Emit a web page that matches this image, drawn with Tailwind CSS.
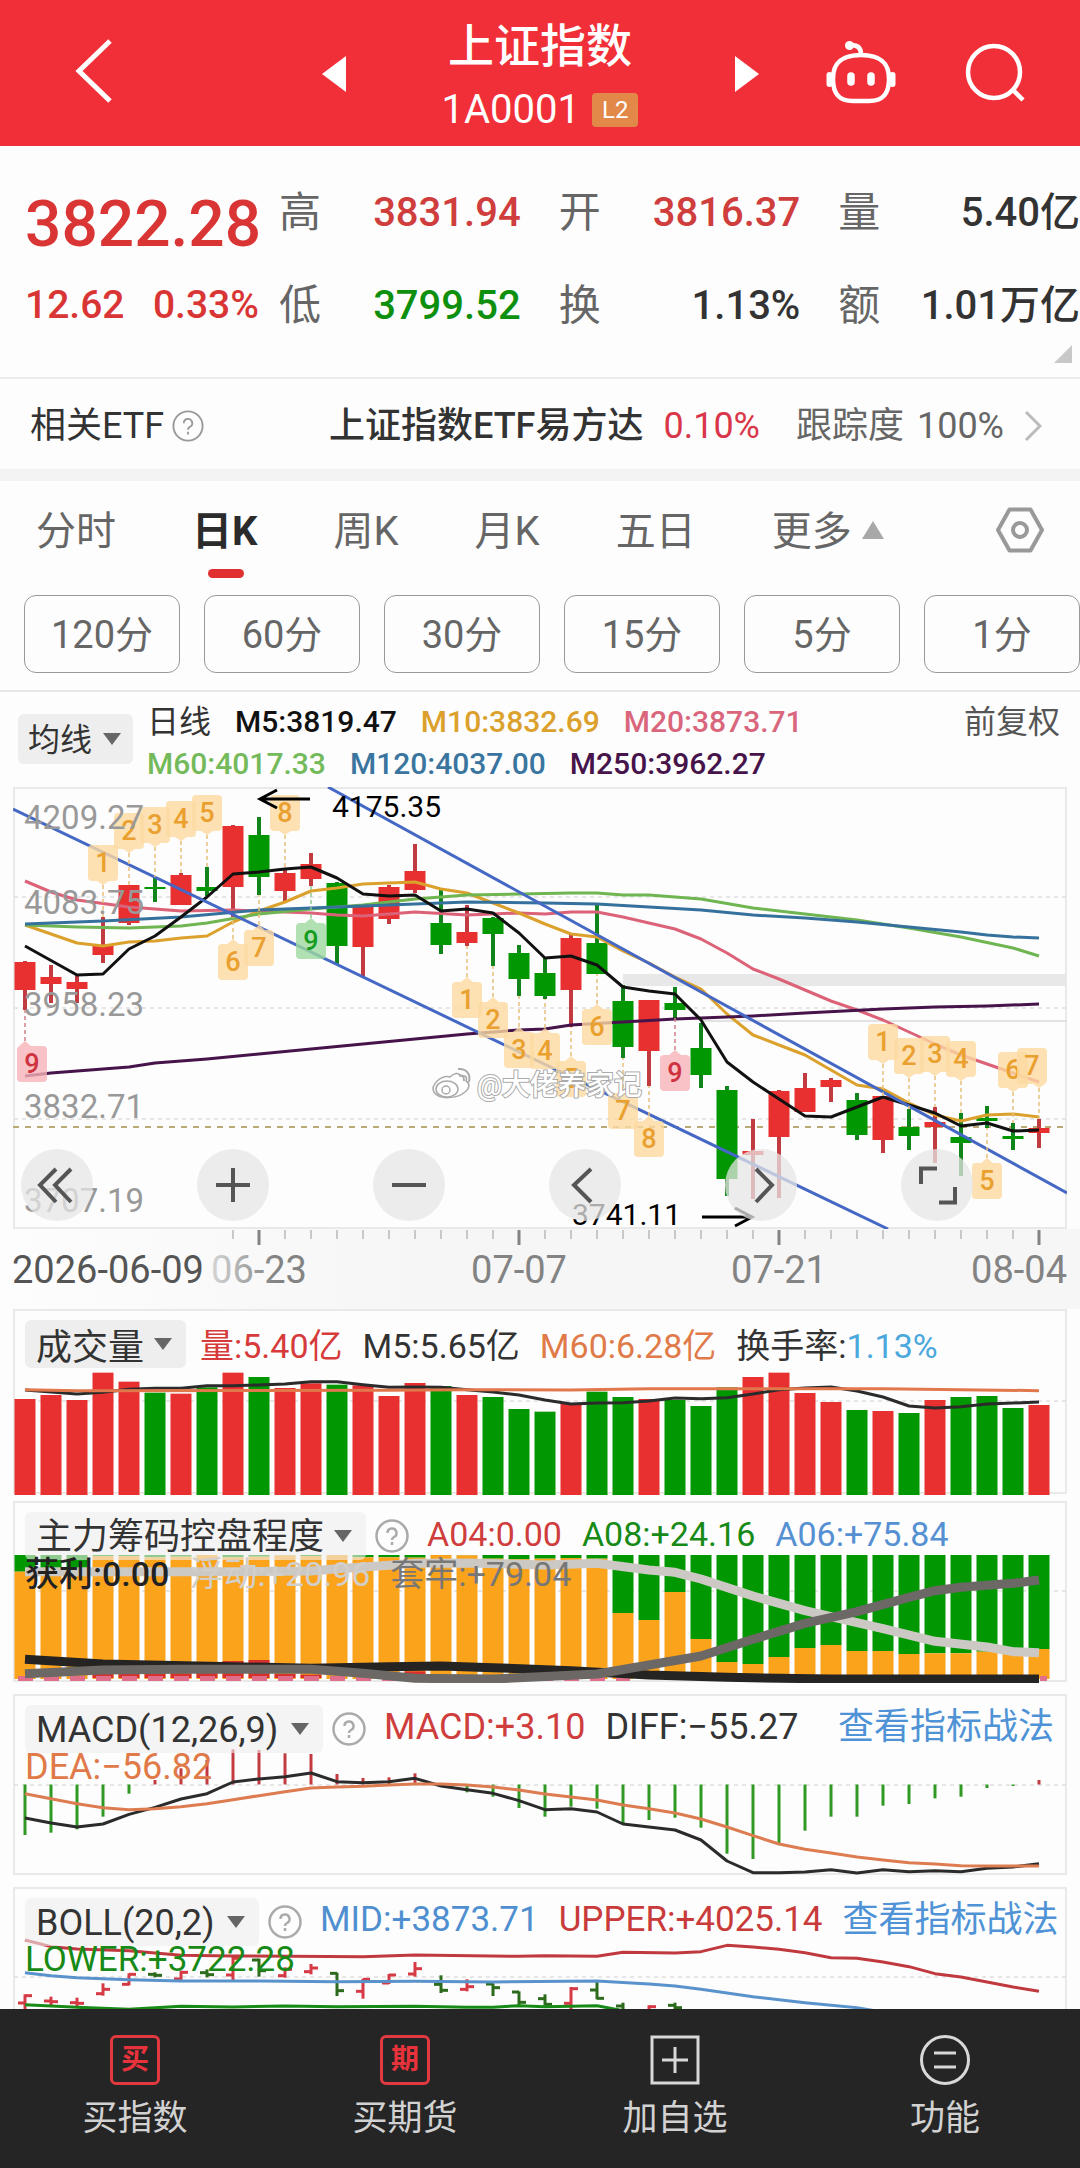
<!DOCTYPE html>
<html lang="zh-CN">
<head>
  <meta charset="UTF-8">
  <meta name="viewport" content="width=device-width, initial-scale=1.0">
  <title>上证指数 1A0001</title>
  <script src="https://cdn.jsdelivr.net/npm/@tailwindcss/browser@4"></script>
</head>
<body class="flex h-screen flex-col overflow-hidden bg-[#fdfdfd] font-['Roboto','Noto_Sans_CJK_SC',sans-serif] text-[#333]">

  <!-- Header -->
  <header class="relative flex h-[146px] shrink-0 items-center justify-center bg-[#f12f38] pt-2.5 text-white">
    <button class="absolute left-[74px] top-[38px]" aria-label="返回">
      <svg class="h-[66px] w-10" viewBox="0 0 40 66" fill="none" stroke="#fff" stroke-width="5"><path d="M36 3 5 33l31 30"/></svg>
    </button>
    <button class="absolute left-[322px] top-[56px]" aria-label="上一个">
      <svg class="h-9 w-6" viewBox="0 0 24 36" fill="#fff"><path d="M24 0v36L0 18z"/></svg>
    </button>
    <div class="flex flex-col items-center">
      <h1 class="text-[46px] font-medium leading-[64px]">上证指数</h1>
      <div class="flex items-center gap-3">
        <span class="text-[40px] leading-[64px]">1A0001</span>
        <span class="rounded-sm bg-[#e2894a] px-2.5 text-[24px] leading-[34px]">L2</span>
      </div>
    </div>
    <button class="absolute left-[735px] top-[56px]" aria-label="下一个">
      <svg class="h-9 w-6" viewBox="0 0 24 36" fill="#fff"><path d="M0 0v36l24-18z"/></svg>
    </button>
    <button class="absolute right-[183px] top-[38px]" aria-label="智能助手">
      <svg class="h-[68px] w-[72px]" viewBox="0 0 72 68" fill="none" stroke="#fff" stroke-width="4.500" stroke-linecap="round">
        <path d="M36 17C60 17 64 29 64 41S60 63 44 63H28C12 63 8 53 8 41S12 17 36 17z"/>
        <path d="M36 16c0-6-3-9-10-9"/>
        <circle cx="24.500" cy="7.500" r="4.500" fill="#fff" stroke="none"/>
        <path d="M4.500 37v9M67.500 37v9" stroke-width="6"/>
        <path d="M26 38v6M46 38v6" stroke-width="7.500"/>
      </svg>
    </button>
    <button class="absolute right-[52px] top-[42px]" aria-label="搜索">
      <svg class="h-[64px] w-[64px]" viewBox="0 0 64 64" fill="none" stroke="#fff" stroke-width="4.500"><circle cx="30" cy="30" r="26"/><path d="m49 48 10 10"/></svg>
    </button>
  </header>

  <main class="min-h-0 flex-1 overflow-hidden">

    <!-- Quote -->
    <section class="relative flex h-[233px] border-b-2 border-[#ececec] pl-[25px] pt-5 text-[40px] font-medium">
      <div class="w-[234px] shrink-0 text-[#d93535]">
        <div class="text-[64px] leading-[118px]">3822.28</div>
        <div class="flex justify-between text-[39px] leading-[42px]"><span>12.62</span><span>0.33%</span></div>
      </div>
      <dl class="ml-5 grid flex-1 grid-cols-3 content-start gap-x-[38px] leading-[93px]">
        <div class="flex h-[93px] justify-between"><dt class="text-[42px] font-normal text-[#666]">高</dt><dd class="text-[#cf3d3d]">3831.94</dd></div>
        <div class="flex h-[93px] justify-between"><dt class="text-[42px] font-normal text-[#666]">开</dt><dd class="text-[#cf3d3d]">3816.37</dd></div>
        <div class="flex h-[93px] justify-between"><dt class="text-[42px] font-normal text-[#666]">量</dt><dd>5.40亿</dd></div>
        <div class="flex h-[93px] justify-between"><dt class="text-[42px] font-normal text-[#666]">低</dt><dd class="text-[#0e8f0e]">3799.52</dd></div>
        <div class="flex h-[93px] justify-between"><dt class="text-[42px] font-normal text-[#666]">换</dt><dd>1.13%</dd></div>
        <div class="flex h-[93px] justify-between"><dt class="text-[42px] font-normal text-[#666]">额</dt><dd class="whitespace-nowrap">1.01万亿</dd></div>
      </dl>
      <svg class="absolute bottom-3.5 right-2 size-[18px]" viewBox="0 0 18 18" fill="#c8c8c8"><path d="M18 0v18H0z"/></svg>
    </section>

    <!-- Related ETF -->
    <section class="flex h-[102px] items-center border-b-12 border-[#f3f3f3] pl-[30px] pr-[38px] pt-1 text-[36px]">
      <span>相关ETF</span>
      <svg class="ml-2 size-8" viewBox="0 0 34 34" fill="none" stroke="#999" stroke-width="2"><circle cx="17" cy="17" r="15.500"/><path d="M12.500 14a4.500 4.500 0 1 1 6.500 4c-1.500.8-2 1.500-2 3M17 23v3"/></svg>
      <a href="#" class="ml-auto flex items-center">
        <span class="font-medium">上证指数ETF易方达</span>
        <span class="ml-5 text-[#d9364a]">0.10%</span>
        <span class="ml-9 text-[#666]">跟踪度 <span class="ml-1">100%</span></span>
        <svg class="ml-5 h-8 w-[18px]" viewBox="0 0 18 32" fill="none" stroke="#bbb" stroke-width="3"><path d="m2 2 14 14L2 30"/></svg>
      </a>
    </section>

    <!-- Periods -->
    <nav class="flex h-[101px] items-center gap-[76px] pl-9 pr-9 text-[40px] text-[#666]">
      <button>分时</button>
      <button class="relative font-bold text-[#2b2b2b]">日K<span class="absolute -bottom-4 left-4 h-[9px] w-9 rounded-full bg-[#e03030]"></span></button>
      <button>周K</button>
      <button>月K</button>
      <button>五日</button>
      <button class="flex items-center gap-2.5">更多<svg class="mb-1 h-[18px] w-[22px]" viewBox="0 0 22 18" fill="#a8a8a8"><path d="m11 0 11 18H0z"/></svg></button>
      <button class="mb-1 ml-auto" aria-label="设置">
        <svg class="h-[46px] w-[48px]" viewBox="0 0 48 46" fill="none" stroke="#999" stroke-width="4" stroke-linejoin="round"><path d="M13.500 2.500h21L46 23 34.500 43.500h-21L2 23z"/><circle cx="24" cy="23" r="7"/></svg>
      </button>
    </nav>
    <div class="flex gap-6 overflow-hidden border-b-2 border-[#e8e8e8] pb-[17px] pl-6 pt-[13px] text-[38px] text-[#666]">
      <button class="h-[78px] w-[156px] shrink-0 rounded-xl border border-[#999] pt-0.5">120分</button>
      <button class="h-[78px] w-[156px] shrink-0 rounded-xl border border-[#999] pt-0.5">60分</button>
      <button class="h-[78px] w-[156px] shrink-0 rounded-xl border border-[#999] pt-0.5">30分</button>
      <button class="h-[78px] w-[156px] shrink-0 rounded-xl border border-[#999] pt-0.5">15分</button>
      <button class="h-[78px] w-[156px] shrink-0 rounded-xl border border-[#999] pt-0.5">5分</button>
      <button class="h-[78px] w-[156px] shrink-0 rounded-xl border border-[#999] pt-0.5">1分</button>
    </div>

    <!-- Moving averages -->
    <div class="flex h-[95px] items-start pl-[18px] pr-5">
      <label class="relative mt-[22px]" aria-label="主图指标">
        <select class="h-[50px] appearance-none rounded-md bg-[#eee] pl-2.5 pr-10 pt-0.5 text-[32px]"><option>均线</option></select>
        <svg class="pointer-events-none absolute right-3 top-[19px] h-3 w-[18px]" viewBox="0 0 18 12" fill="#666"><path d="M0 0h18L9 12z"/></svg>
      </label>
      <div class="ml-[14px] mt-[9px] text-[30px] font-medium leading-[42px]">
        <div class="flex gap-6"><span class="text-[32px] font-normal">日线</span><span class="text-[#111]">M5:3819.47</span><span class="text-[#dba12c]">M10:3832.69</span><span class="text-[#d9667c]">M20:3873.71</span></div>
        <div class="flex gap-6"><span class="text-[#74b95a]">M60:4017.33</span><span class="text-[#3a75a0]">M120:4037.00</span><span class="text-[#46144a]">M250:3962.27</span></div>
      </div>
      <span class="ml-auto mt-[9px] text-[32px] leading-[42px] text-[#555]">前复权</span>
    </div>

    <!-- Candles -->
    <section class="relative mx-[13px]">
      <svg id="price" class="block w-full" viewBox="13 787 1054 442" font-family="Roboto, 'Noto Sans CJK SC', sans-serif"></svg>
      <div class="absolute bottom-2 left-2 flex gap-[104px] text-[#555]">
        <button class="size-[72px] rounded-full bg-[#e6e6e6]/75" aria-label="最左"><svg viewBox="0 0 72 72" fill="none" stroke="currentColor" stroke-width="4"><path d="M35 20 19 36l16 17M50 20 34 36l16 17"/></svg></button>
        <button class="size-[72px] rounded-full bg-[#e6e6e6]/75" aria-label="放大"><svg viewBox="0 0 72 72" fill="none" stroke="currentColor" stroke-width="4"><path d="M19 36h34M36 19v34"/></svg></button>
        <button class="size-[72px] rounded-full bg-[#e6e6e6]/75" aria-label="缩小"><svg viewBox="0 0 72 72" fill="none" stroke="currentColor" stroke-width="4"><path d="M19 36h34"/></svg></button>
        <button class="size-[72px] rounded-full bg-[#e6e6e6]/75" aria-label="左移"><svg viewBox="0 0 72 72" fill="none" stroke="currentColor" stroke-width="4"><path d="M42 20 25 36l17 17"/></svg></button>
        <button class="size-[72px] rounded-full bg-[#e6e6e6]/75" aria-label="右移"><svg viewBox="0 0 72 72" fill="none" stroke="currentColor" stroke-width="4"><path d="m31 20 16 16-16 17"/></svg></button>
        <button class="size-[72px] rounded-full bg-[#e6e6e6]/75" aria-label="全屏"><svg viewBox="0 0 72 72" fill="none" stroke="currentColor" stroke-width="4"><path d="M20 35V19.500h16M54 38v15.500H38"/></svg></button>
      </div>
    </section>
    <div class="bg-linear-to-r from-[#fdfdfd] to-[#f6f6f6] to-40% px-[13px]">
      <svg id="axis" class="block w-full" viewBox="13 1229 1054 80" font-family="Roboto, sans-serif"></svg>
    </div>

    <!-- Volume -->
    <section class="relative mx-[13px] mb-[5px]">
      <svg id="volume" class="block w-full" viewBox="13 9 1054 187"></svg>
      <div class="absolute left-3 right-[13px] top-[11px] flex items-start gap-5 text-[34px] leading-[52px]">
        <label class="relative -mr-1.5" aria-label="副图一">
          <select class="h-[48px] appearance-none rounded-md bg-[#eee] pl-[11px] pr-[41px] pt-0.5 text-[36px]"><option>成交量</option></select>
          <svg class="pointer-events-none absolute right-3.5 top-[18px] h-3 w-[18px]" viewBox="0 0 18 12" fill="#666"><path d="M0 0h18L9 12z"/></svg>
        </label>
        <span class="text-[#d63a3a]">量:5.40亿</span><span>M5:5.65亿</span><span class="text-[#e07a48]">M60:6.28亿</span><span>换手率:<span class="text-[#4aa8dc]">1.13%</span></span>
      </div>
    </section>

    <!-- Position control -->
    <section class="relative mx-[13px] mb-[11px]">
      <svg id="control" class="block w-full" viewBox="13 1 1054 182"></svg>
      <div class="absolute left-3 right-[13px] top-[11px] flex items-start gap-5 text-[34px] leading-11">
        <div class="-mr-0.5 flex items-center gap-[9px]">
          <label class="relative" aria-label="副图二">
            <select class="h-[48px] appearance-none rounded-md bg-[#eee]/60 pl-[11px] pr-[41px] pt-0.5 text-[36px]"><option>主力筹码控盘程度</option></select>
            <svg class="pointer-events-none absolute right-3.5 top-[18px] h-3 w-[18px]" viewBox="0 0 18 12" fill="#666"><path d="M0 0h18L9 12z"/></svg>
          </label>
          <svg class="size-[34px]" viewBox="0 0 34 34" fill="none" stroke="#aaa" stroke-width="2.500"><circle cx="17" cy="17" r="15.500"/><path d="M12.500 14a4.500 4.500 0 1 1 6.500 4c-1.500.8-2 1.500-2 3M17 23v3"/></svg>
        </div>
        <span class="text-[#cf3d3d]">A04:0.00</span><span class="text-[#178a17]">A08:+24.16</span><span class="text-[#5590d2]">A06:+75.84</span>
      </div>
      <div class="absolute left-3 top-[51px] flex gap-5 text-[34px] leading-11">
        <span class="font-medium text-[#222]">获利:0.00</span><span class="text-[#d2cfcb]">浮动:+20.96</span><span class="text-[#777]">套牢:+79.04</span>
      </div>
    </section>

    <!-- MACD -->
    <section class="relative mx-[13px] mb-3">
      <svg id="macd" class="block w-full" viewBox="13 4 1054 181"></svg>
      <div class="absolute left-3 right-[13px] top-[11px] flex items-start gap-5 text-[36px] leading-11">
        <div class="-mr-0.5 flex items-center gap-[9px]">
          <label class="relative" aria-label="副图三">
            <select class="h-[48px] appearance-none rounded-md bg-[#eee]/60 pl-[11px] pr-11 pt-0.5 text-[36px]"><option>MACD(12,26,9)</option></select>
            <svg class="pointer-events-none absolute right-3.5 top-[18px] h-3 w-[18px]" viewBox="0 0 18 12" fill="#666"><path d="M0 0h18L9 12z"/></svg>
          </label>
          <svg class="size-[34px]" viewBox="0 0 34 34" fill="none" stroke="#aaa" stroke-width="2.500"><circle cx="17" cy="17" r="15.500"/><path d="M12.500 14a4.500 4.500 0 1 1 6.500 4c-1.500.8-2 1.500-2 3M17 23v3"/></svg>
        </div>
        <span class="text-[#cf3d3d]">MACD:+3.10</span><span>DIFF:−55.27</span>
        <a href="#" class="ml-auto whitespace-nowrap text-[36px] text-[#4f93d6]">查看指标战法</a>
      </div>
      <div class="absolute left-3 top-[51px] text-[36px] leading-11 text-[#e07a48]">DEA:−56.82</div>
    </section>

    <!-- BOLL -->
    <section class="relative mx-[13px]">
      <svg id="boll" class="block w-full" viewBox="13 7 1054 181"></svg>
      <div class="absolute left-3 right-[13px] top-[11px] flex items-start gap-5 text-[35px] leading-11">
        <div class="-mr-0.5 flex items-center gap-[9px]">
          <label class="relative" aria-label="副图四">
            <select class="h-[48px] appearance-none rounded-md bg-[#eee]/60 pl-[11px] pr-11 pt-0.5 text-[36px]"><option>BOLL(20,2)</option></select>
            <svg class="pointer-events-none absolute right-3.5 top-[18px] h-3 w-[18px]" viewBox="0 0 18 12" fill="#666"><path d="M0 0h18L9 12z"/></svg>
          </label>
          <svg class="size-[34px]" viewBox="0 0 34 34" fill="none" stroke="#aaa" stroke-width="2.500"><circle cx="17" cy="17" r="15.500"/><path d="M12.500 14a4.500 4.500 0 1 1 6.500 4c-1.500.8-2 1.500-2 3M17 23v3"/></svg>
        </div>
        <span class="text-[#4f8fd0]">MID:+3873.71</span><span class="text-[#c93a3a]">UPPER:+4025.14</span>
        <a href="#" class="-ml-2 whitespace-nowrap pl-2 text-[36px] text-[#4f93d6]">查看指标战法</a>
      </div>
      <div class="absolute left-3 top-[51px] text-[35px] leading-11 text-[#178a17]">LOWER:+3722.28</div>
    </section>
  </main>

  <!-- Bottom bar -->
  <nav class="grid h-[159px] shrink-0 grid-cols-4 bg-[#252525] pt-[26px] text-[35px] leading-[52px] text-[#d2d2d2]">
    <button class="flex flex-col items-center gap-2">
      <span class="flex size-[50px] items-center justify-center rounded-md border-3 border-[#e03a40] text-[28px] font-bold leading-none text-[#e8333c]">买</span>买指数
    </button>
    <button class="flex flex-col items-center gap-2">
      <span class="flex size-[50px] items-center justify-center rounded-md border-3 border-[#e03a40] text-[28px] font-bold leading-none text-[#e8333c]">期</span>买期货
    </button>
    <button class="flex flex-col items-center gap-2">
      <svg class="size-[50px]" viewBox="0 0 50 50" fill="none" stroke="#d8d8d8" stroke-width="3"><path d="M2 2h46v46H2zM25 12v26M12 25h26"/></svg>加自选
    </button>
    <button class="flex flex-col items-center gap-2">
      <svg class="size-[50px]" viewBox="0 0 50 50" fill="none" stroke="#d8d8d8" stroke-width="3"><circle cx="25" cy="25" r="23.500"/><path d="M14 18h22M14 32h22"/></svg>功能
    </button>
  </nav>

  <script>
    const RED = '#e83030', GREEN = '#009700', WICK_RED = '#c23b41', WICK_GREEN = '#12841c';
    const X = i => 25 + 26 * i;
    const el = id => document.getElementById(id);
    const line = (x1, y1, x2, y2, c, w, extra = '') => `<line x1="${x1}" y1="${y1}" x2="${x2}" y2="${y2}" stroke="${c}" stroke-width="${w}" ${extra}/>`;
    const rect = (x, y, w, h, c) => `<rect x="${x}" y="${y}" width="${w}" height="${h}" fill="${c}"/>`;
    const text = (x, y, size, c, t, extra = '') => `<text x="${x}" y="${y}" font-size="${size}" fill="${c}" ${extra}>${t}</text>`;
    // pairs: [index, y, index, y, ...]
    const curve = (pairs, c, w, k = 1) => {
      let pts = '';
      for (let n = 0; n < pairs.length; n += 2) pts += `${X(pairs[n])},${pairs[n + 1] * k} `;
      return `<polyline points="${pts}" fill="none" stroke="${c}" stroke-width="${w}" stroke-linejoin="round"/>`;
    };
    const indexed = list => list.flatMap((v, i) => [i, v]);
    const frame = (y, h) => `<rect x="14" y="${y + 1}" width="1052" height="${h - 2}" fill="none" stroke="#e9e9e9" stroke-width="2"/>`;
    const grid = y => line(14, y, 1066, y, '#dedede', 1.5, 'stroke-dasharray="4 4"');

    // up/down, high, top, bottom, low
    const candles = [
      ['r', 961, 962, 990, 1010], ['r', 965, 977, 984, 1003], ['r', 975, 982, 989, 1003], ['r', 917, 945, 955, 963],
      ['r', 885, 885, 923, 925], ['g', 877, 887, 889, 902], ['r', 873, 875, 905, 905], ['g', 867, 887, 891, 896],
      ['r', 825, 826, 887, 917], ['g', 817, 835, 877, 895], ['r', 868, 873, 891, 902], ['r', 853, 864, 879, 886],
      ['g', 882, 883, 946, 965], ['r', 907, 907, 947, 977], ['r', 885, 887, 919, 924], ['r', 844, 871, 890, 893],
      ['g', 890, 923, 945, 954], ['r', 905, 932, 943, 946], ['g', 917, 918, 934, 966], ['g', 945, 953, 979, 996],
      ['g', 958, 973, 996, 999], ['r', 935, 938, 990, 1027], ['g', 903, 943, 974, 974], ['g', 985, 1001, 1047, 1058],
      ['r', 1000, 1000, 1051, 1086], ['g', 987, 1003, 1010, 1018], ['g', 1023, 1048, 1075, 1088], ['g', 1086, 1090, 1179, 1196],
      ['r', 1119, 1151, 1155, 1199], ['r', 1090, 1091, 1137, 1198], ['r', 1073, 1088, 1112, 1112], ['r', 1078, 1080, 1087, 1102],
      ['g', 1093, 1100, 1135, 1140], ['r', 1096, 1096, 1140, 1153], ['g', 1109, 1127, 1136, 1150], ['r', 1107, 1122, 1127, 1163],
      ['g', 1113, 1137, 1143, 1176], ['g', 1106, 1118, 1121, 1128], ['g', 1123, 1136, 1139, 1150], ['r', 1119, 1128, 1133, 1148],
    ];

    // index, label, top of box, dash end, box side, colours, centre shift
    const marks = [
      [3, 1, 845, 917, 'up'], [4, 2, 813, 885, 'up'], [5, 3, 807, 877, 'up'], [6, 4, 801, 873, 'up'], [7, 5, 795, 867, 'up'], [10, 8, 795, 868, 'up'],
      [8, 6, 944, 917, 'down'], [9, 7, 930, 895, 'down'], [11, 9, 923, 886, 'down', 'g'],
      [17, 1, 982, 946, 'down'], [18, 2, 1002, 966, 'down'], [19, 3, 1032, 996, 'down'], [20, 4, 1033, 999, 'down'], [21, 5, 1061, 1027, 'down'],
      [22, 6, 1009, 974, 'down'], [23, 7, 1093, 1058, 'down'], [24, 8, 1121, 1086, 'down'], [25, 9, 1055, 1018, 'down', 'r'], [0, 9, 1046, 1010, 'down', 'r', 7],
      [33, 1, 1024, 1096, 'up'], [34, 2, 1038, 1109, 'up'], [35, 3, 1036, 1107, 'up'], [36, 4, 1041, 1113, 'up'],
      [38, 6, 1052, 1123, 'up'], [39, 7, 1048, 1119, 'up', 'o', -7], [37, 5, 1163, 1128, 'down'],
    ];
    const markColors = { o: ['#fdd9a0', '#eaa02f', '#e6c07a'], g: ['#9dd9a0', '#169c20', '#8ec98e'], r: ['#f7b3b8', '#cf3340', '#d08088'] };

    function drawPrice() {
      let s = frame(787, 442) + grid(897) + grid(1008) + grid(1119);
      s += rect(623, 974, 444, 12, '#e8e8e8') + line(700, 1021, 1067, 1021, '#e2e2e2', 2);
      s += line(13, 1127, 1067, 1127, '#b9a878', 2, 'stroke-dasharray="6 6"');
      candles.forEach(([d, hi, top, bot, lo], i) => {
        s += line(X(i), hi, X(i), lo, d === 'r' ? WICK_RED : WICK_GREEN, 4);
        s += rect(X(i) - 10.5, top, 21, bot - top, d === 'r' ? RED : GREEN);
      });
      s += curve([0, 881, 1, 892, 2, 900, 4, 907, 6, 911, 8, 910, 9, 911, 11, 913, 12, 915, 13, 916, 15, 912, 17, 915, 19, 913, 20, 914, 21, 912, 22, 912, 23, 917, 24, 923, 25, 929, 26, 939, 27, 953, 28, 969, 29, 979, 30, 990, 31, 1001, 32, 1010, 33, 1020, 34, 1032, 35, 1044, 36, 1055, 37, 1064, 38, 1073, 39, 1082], '#dc6278', 3);
      s += curve([0, 925, 2, 943, 3, 946, 4, 942, 5, 941, 6, 938, 7, 936, 8, 922, 9, 911, 10, 902, 11, 891, 12, 888, 13, 884, 14, 883, 15, 882, 16, 889, 17, 893, 18, 903, 19, 913, 20, 924, 21, 934, 22, 937, 23, 951, 24, 963, 25, 977, 26, 989, 27, 1014, 28, 1035, 29, 1045, 30, 1055, 31, 1070, 32, 1085, 33, 1089, 34, 1103, 35, 1115, 36, 1121, 37, 1115, 38, 1114, 39, 1117], '#dba12c', 3);
      s += curve([0, 925, 2, 927, 4, 928, 6, 926, 7, 923, 9, 914, 11, 909, 13, 905, 15, 899, 17, 895, 19, 894, 21, 893, 22, 893, 23, 895, 24, 895, 26, 899, 28, 908, 30, 914, 32, 920, 34, 928, 36, 937, 38, 948, 39, 956], '#6fb551', 3);
      s += curve([0, 924, 3, 921, 6, 917, 9, 910, 11, 908, 14, 905, 17, 902, 20, 903, 22, 904, 24, 907, 26, 910, 28, 915, 30, 918, 32, 922, 34, 927, 36, 932, 37, 935, 38, 937, 39, 938], '#35719c', 3);
      s += curve([0, 1076, 1, 1073, 2, 1071, 3, 1069, 4, 1067, 5, 1063, 7, 1059, 9, 1054, 11, 1049, 13, 1044, 15, 1039, 17, 1034, 19, 1030, 20, 1029, 21, 1025, 23, 1022, 25, 1019, 28, 1016, 30, 1013, 33, 1009, 35, 1007, 37, 1006, 39, 1004], '#46144a', 3);
      s += curve([0, 946, 2, 975, 3, 974, 4, 949, 5, 936, 6, 917, 7, 897, 8, 874, 9, 872, 10, 869, 11, 867, 12, 878, 13, 894, 14, 896, 15, 895, 16, 911, 17, 909, 18, 913, 19, 933, 20, 958, 21, 956, 22, 965, 23, 987, 24, 991, 25, 994, 26, 1020, 27, 1062, 28, 1082, 29, 1099, 30, 1116, 31, 1117, 32, 1107, 33, 1097, 34, 1105, 35, 1113, 36, 1126, 37, 1123, 38, 1131, 39, 1130], '#111', 3);
      s += line(13, 809, 888, 1229, '#4468c4', 3) + line(328, 787, 1067, 1193, '#4468c4', 3);

      marks.forEach(([i, n, y, end, dir, c = 'o', dx = 0]) => {
        const x = X(i), cx = x + dx, up = dir === 'up', [fill, ink, dash] = markColors[c];
        s += line(x, up ? y + 40 : y - 5, x, end, dash, 1.5, 'stroke-dasharray="4 3"');
        s += `<g fill="${fill}" fill-opacity="0.8"><rect x="${cx - 15}" y="${y}" width="30" height="36" rx="4"/><path d="${up ? `M${x - 6} ${y + 36}l6 4 6-4z` : `M${x - 6} ${y}l6-5 6 5z`}"/></g>`;
        s += text(cx, y + 27, 27, ink, n, 'text-anchor="middle" font-weight="500"');
      });

      ['4209.27', '4083.75', '3958.23', '3832.71', '3707.19'].forEach((t, n) => {
        s += text(24, [829, 914, 1016, 1118, 1212][n], 33, '#999', t);
      });
      s += text(332, 817, 30, '#000', '4175.35') + '<path d="M310 799H261M277 790l-17 9 17 9" fill="none" stroke="#000" stroke-width="3"/>';
      s += text(572, 1225, 30, '#000', '3741.11') + '<path d="M702 1217h50M735 1208l17 9-17 9" fill="none" stroke="#000" stroke-width="3"/>';

      // watermark
      s += '<g fill="#fff" stroke="#aaa" stroke-width="1.500"><path d="M450 1077c4-4 9-5 10-1 4-1 8 0 6 5 4 2 4 7-1 11-8 7-26 8-31 0-4-7 8-18 16-15z"/><ellipse cx="447" cy="1089" rx="11" ry="8"/><circle cx="446" cy="1090" r="4"/></g>';
      s += '<path d="M458 1069c8-1 13 5 11 13M459 1075c4 0 5 2 5 6" fill="none" stroke="#aaa" stroke-width="2"/>';
      s += text(477, 1095, 28, '#fff', '@大佬养家记', 'stroke="#aaa" stroke-width="2" paint-order="stroke" font-weight="500"');
      el('price').innerHTML = s;
    }

    function drawAxis() {
      let s = '<linearGradient id="fade" gradientUnits="userSpaceOnUse" x1="205" x2="275"><stop offset="0" stop-color="#ddd"/><stop offset="1" stop-color="#838383"/></linearGradient>';
      for (let i = 8; i < 40; i++) s += i % 10 === 9 ? line(X(i), 1230, X(i), 1245, '#838383', 3) : line(X(i), 1230, X(i), 1239, '#999', 1);
      s += text(12, 1283, 38, '#555', '2026-06-09');
      s += text(259, 1283, 38, 'url(#fade)', '06-23', 'text-anchor="middle"') + text(519, 1283, 38, '#838383', '07-07', 'text-anchor="middle"');
      s += text(779, 1283, 38, '#838383', '07-21', 'text-anchor="middle"') + text(1067, 1283, 38, '#838383', '08-04', 'text-anchor="end"');
      el('axis').innerHTML = s;
    }

    function drawVolume() {
      const tops = [297, 285, 300, 218, 245, 278, 281, 262, 218, 231, 264, 250, 254, 256, 288, 249, 258, 285, 291, 327, 335, 312, 275, 291, 297, 300, 318, 262, 231, 218, 279, 306, 330, 333, 339, 300, 291, 288, 324, 315];
      let s = frame(9, 185) + grid(101);
      tops.forEach((t, i) => { s += rect(X(i) - 10.5, t / 3, 21, 195 - t / 3, candles[i][0] === 'r' ? RED : GREEN); });
      s += curve(indexed([270, 276, 282, 277, 268, 265, 265, 257, 257, 255, 252, 245, 245, 254, 262, 261, 262, 269, 276, 285, 300, 312, 309, 308, 303, 294, 296, 293, 282, 269, 264, 261, 273, 291, 318, 324, 320, 312, 309, 306]), '#2b2b2b', 3, 1 / 3);
      s += curve([0, 269, 2, 272, 14, 271, 17, 269, 21, 270, 24, 266, 33, 266, 36, 269, 39, 272], '#e0784c', 3, 1 / 3);
      el('volume').innerHTML = s;
    }

    function drawControl() {
      const split = [215, 215, 212, 168, 168, 172, 170, 165, 172, 170, 166, 168, 165, 172, 172, 173, 165, 166, 176, 178, 176, 174, 176, 339, 360, 276, 417, 486, 492, 471, 444, 435, 453, 453, 462, 460, 460, 455, 455, 447];
      let s = frame(1, 181) + grid(91);
      split.forEach((t, i) => {
        s += rect(X(i) - 10.5, 55, 21, t / 3 - 55, GREEN) + rect(X(i) - 10.5, t / 3, 21, 179 - t / 3, '#fca31c');
      });
      [[3, 522], [4, 522], [5, 522], [6, 520], [7, 515], [8, 483], [9, 480], [10, 522], [11, 524], [15, 514]].forEach(([i, t]) => { s += rect(X(i) - 10.5, t / 3, 21, 178 - t / 3, '#d8302c'); });
      s += line(18, 178.5, 630, 178.5, '#e06f8c', 5, 'stroke-dasharray="15 11"') + line(1040, 178.5, 1047, 178.5, '#e06f8c', 5);
      s += curve([0, 215, 8, 215, 11, 213, 12, 206, 14, 196, 15, 190, 17, 189, 19, 193, 20, 195, 22, 190, 24, 210, 25, 217, 26, 237, 28, 288, 30, 332, 31, 350, 33, 386, 35, 424, 37, 441, 38, 455, 39, 458], '#ccc8c4', 9, 1 / 3);
      s += curve([0, 478, 3, 492, 8, 500, 11, 505, 14, 500, 16, 498, 18, 503, 21, 512, 24, 525, 27, 532, 31, 537, 39, 537], '#262422', 9, 1 / 3);
      s += curve([0, 521, 3, 510, 6, 508, 11, 508, 13, 520, 15, 535, 18, 537, 22, 522, 24, 495, 26, 468, 28, 418, 30, 370, 32, 335, 34, 292, 35, 272, 36, 262, 38, 250, 39, 240], '#6b6865', 9, 1 / 3);
      el('control').innerHTML = s;
    }

    function drawMacd() {
      const bars = [435, 428, 418, 380, 311, 270, 235, 210, 178, 180, 190, 192, 252, 264, 262, 250, 285, 307, 320, 354, 380, 350, 356, 400, 390, 383, 413, 491, 507, 460, 422, 380, 380, 347, 342, 325, 320, 294, 288, 270];
      let s = frame(4, 181) + grid(95);
      bars.forEach((b, i) => { s += line(X(i), 94.5, X(i), b / 3, b < 284 ? '#c23b41' : '#2f9a23', 3); });
      s += curve(indexed([384, 399, 411, 402, 373, 352, 327, 311, 276, 267, 260, 249, 275, 278, 275, 265, 288, 299, 310, 332, 359, 356, 366, 402, 411, 420, 450, 513, 548, 548, 546, 539, 549, 539, 545, 542, 545, 535, 531, 521]), '#2b2b2b', 3, 1 / 3);
      s += curve(indexed([311, 326, 341, 353, 359, 356, 350, 341, 329, 317, 305, 294, 291, 289, 285, 282, 282, 285, 291, 300, 312, 321, 330, 345, 356, 369, 387, 411, 437, 462, 478, 489, 501, 510, 518, 522, 527, 528, 528, 528]), '#dd7c50', 3, 1 / 3);
      el('macd').innerHTML = s;
    }

    function drawBoll() {
      // high, low, open, close
      const ticks = [[343, 387, 369, 347], [350, 377, 363, 365], [353, 382, 368, 370], [310, 347, 341, 328], [280, 316, 313, 283], [277, 292, 283, 286], [272, 300, 297, 277], [268, 292, 278, 284], [228, 300, 285, 235], [236, 290, 240, 272], [262, 293, 287, 268], [252, 283, 275, 264], [278, 348, 280, 332], [296, 356, 334, 298], [282, 312, 309, 285], [246, 290, 282, 266], [286, 339, 313, 331], [298, 334, 328, 320], [310, 348, 312, 323], [334, 375, 336, 367], [343, 377, 356, 373], [321, 393, 370, 326], [303, 358, 330, 355], [368, 400, 378, 392], [376, 420, 400, 380], [368, 390, 376, 383]];
      let s = frame(7, 200) + grid(97);
      ticks.forEach(([hi, lo, o, c], i) => {
        const color = candles[i][0] === 'r' ? '#d63a45' : '#2c6b1c';
        s += line(X(i), hi / 3, X(i), lo / 3, color, 3) + line(X(i) - 7, o / 3, X(i), o / 3, color, 3) + line(X(i), c / 3, X(i) + 7, c / 3, color, 3);
      });
      s += curve([0, 180, 1, 200, 2, 207, 4, 212, 6, 226, 8, 228, 13, 230, 15, 225, 19, 229, 20, 227, 22, 229, 23, 217, 25, 219, 26, 215, 27, 196, 28, 201, 29, 208, 30, 218, 31, 233, 32, 235, 33, 246, 34, 260, 35, 281, 36, 291, 37, 306, 38, 321, 39, 334], '#c0393f', 3, 1 / 3);
      s += curve([0, 278, 1, 287, 2, 293, 4, 299, 6, 303, 9, 303, 12, 305, 15, 304, 18, 306, 22, 303, 24, 312, 25, 318, 26, 328, 28, 350, 30, 368, 32, 383, 34, 410], '#5a92cc', 3, 1 / 3);
      s += curve([0, 374, 2, 382, 4, 388, 6, 379, 8, 381, 10, 378, 12, 380, 15, 379, 17, 382, 18, 382, 19, 377, 20, 380, 22, 377, 23, 392, 24, 420], '#178a17', 3, 1 / 3);
      el('boll').innerHTML = s;
    }

    drawPrice();
    drawAxis();
    drawVolume();
    drawControl();
    drawMacd();
    drawBoll();
  </script>
</body>
</html>
